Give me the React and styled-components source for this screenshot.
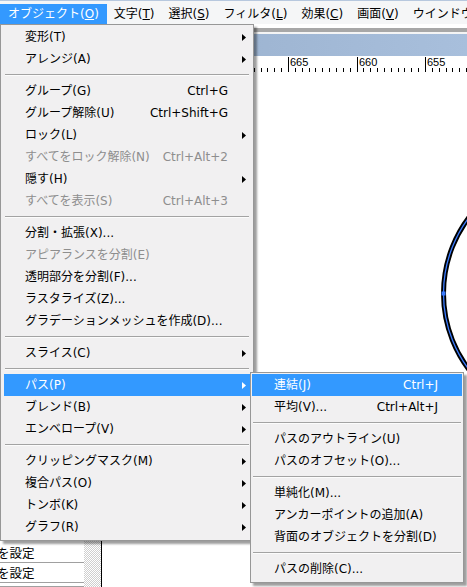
import React from 'react';
import styled, { createGlobalStyle } from 'styled-components';

const Global = createGlobalStyle`
  html, body { margin: 0; padding: 0; background: #fff; }
  body {
    font-family: "DejaVu Sans", "Noto Sans CJK JP", sans-serif;
    font-size: 12px;
    color: #000;
  }
`;

const Screen = styled.div`
  position: relative;
  width: 467px;
  height: 587px;
  overflow: hidden;
  background: #fff;
  display: flex;
  flex-direction: column;
`;

const MenuBar = styled.div`
  height: 24px;
  box-sizing: border-box;
  border-top: 1px solid #b7c8de;
  padding-top: 3px;
  display: flex;
  background: #f5f6f7;
  white-space: nowrap;
  overflow: hidden;
`;

const BarItem = styled.div`
  height: 20px;
  line-height: 20px;
  padding: 0 ${p => (p.$active ? '8px' : '7px')} 0 ${p => (p.$active ? '8px' : '7px')};
  flex: none;
  background: ${p => (p.$active ? '#3399ff' : 'transparent')};
  color: ${p => (p.$active ? '#fff' : '#000')};
`;

const Key = styled.span`
  text-decoration: underline;
  text-underline-offset: 1px;
`;

const Workspace = styled.div`
  flex: 1;
  display: flex;
  min-height: 0;
`;

const LeftPanel = styled.div`
  width: 84px;
  flex: none;
  display: flex;
  flex-direction: column;
  justify-content: flex-end;
  background: #fff;
  overflow: hidden;
`;

const PanelRow = styled.div`
  height: ${p => p.$h || 20}px;
  flex: none;
  box-sizing: border-box;
  border-bottom: 1px solid #a0a0a0;
  line-height: 19px;
  font-size: 12.5px;
  text-indent: -3px;
  white-space: nowrap;
  overflow: hidden;
  font-family: "Noto Sans CJK JP", sans-serif;
`;

const Splitter = styled.div`
  width: 17px;
  flex: none;
  background: repeating-conic-gradient(#cfcfcf 0 25%, #ffffff 0 50%) 0 0 / 2px 2px;
`;

const DocWindow = styled.div`
  flex: 1;
  min-width: 0;
  border-left: 1px solid #000;
  display: flex;
  flex-direction: column;
  background: #fff;
`;

const TopGap = styled.div`
  height: 4px;
  flex: none;
  background: #fff;
`;

const GrayStrip = styled.div`
  height: 4px;
  flex: none;
  background: #a7a7a7;
  border-bottom: 2px solid #f4f4f4;
`;

const TitleBar = styled.div`
  height: 22px;
  flex: none;
  background: linear-gradient(90deg, #96b1cf 0%, #9fb6d3 45%, #a8bfdc 100%);
`;

const RulerBox = styled.div`
  height: 16px;
  flex: none;
  background: #fff;
  svg { display: block; }
`;

const Canvas = styled.div`
  flex: 1;
  min-height: 0;
  background: #fff;
  svg { display: block; }
`;

const Menu = styled.div`
  position: absolute;
  left: ${p => p.$x}px;
  top: ${p => p.$y}px;
  width: ${p => p.$w}px;
  box-sizing: border-box;
  border: 1px solid #979797;
  padding: ${p => p.$pad};
  background: #f1f0f1;
  box-shadow: 3px 3px 2px rgba(0, 0, 0, 0.38);
  z-index: ${p => p.$z || 10};
`;

const Item = styled.div`
  height: 22px;
  display: grid;
  grid-template-columns: 1fr auto ${p => p.$arrowCol}px;
  align-items: center;
  padding-left: ${p => p.$indent}px;
  white-space: nowrap;
  background: ${p => (p.$active ? '#3399ff' : 'transparent')};
  color: ${p => (p.$active ? '#fff' : p.$disabled ? '#8e8e8e' : '#000')};
`;

const Label = styled.span`
  line-height: 22px;
`;

const Shortcut = styled.span`
  line-height: 22px;
  text-align: right;
`;

const ArrowCell = styled.span`
  display: flex;
  align-items: center;
  padding-left: ${p => p.$off}px;
`;

const Separator = styled.div`
  height: 10px;
  display: flex;
  align-items: center;
  padding: 0 ${p => p.$inset}px;
  &::before {
    content: '';
    flex: 1;
    border-top: 1px solid #a3a3a3;
    border-bottom: 1px solid #fcfcfc;
  }
`;

const Arrow = () => (
  <svg width="4" height="7" viewBox="0 0 4 7">
    <polygon points="0,0 4,3.5 0,7" fill="currentColor" />
  </svg>
);

const mainItems = [
  { label: '変形(T)', sub: true },
  { label: 'アレンジ(A)', sub: true },
  'sep',
  { label: 'グループ(G)', sc: 'Ctrl+G' },
  { label: 'グループ解除(U)', sc: 'Ctrl+Shift+G' },
  { label: 'ロック(L)', sub: true },
  { label: 'すべてをロック解除(N)', sc: 'Ctrl+Alt+2', disabled: true },
  { label: '隠す(H)', sub: true },
  { label: 'すべてを表示(S)', sc: 'Ctrl+Alt+3', disabled: true },
  'sep',
  { label: '分割・拡張(X)...' },
  { label: 'アピアランスを分割(E)', disabled: true },
  { label: '透明部分を分割(F)...' },
  { label: 'ラスタライズ(Z)...' },
  { label: 'グラデーションメッシュを作成(D)...' },
  'sep',
  { label: 'スライス(C)', sub: true },
  'sep',
  { label: 'パス(P)', sub: true, active: true },
  { label: 'ブレンド(B)', sub: true },
  { label: 'エンベロープ(V)', sub: true },
  'sep',
  { label: 'クリッピングマスク(M)', sub: true },
  { label: '複合パス(O)', sub: true },
  { label: 'トンボ(K)', sub: true },
  { label: 'グラフ(R)', sub: true },
];

const pathItems = [
  { label: '連結(J)', sc: 'Ctrl+J', active: true },
  { label: '平均(V)...', sc: 'Ctrl+Alt+J' },
  'sep',
  { label: 'パスのアウトライン(U)' },
  { label: 'パスのオフセット(O)...' },
  'sep',
  { label: '単純化(M)...' },
  { label: 'アンカーポイントの追加(A)' },
  { label: '背面のオブジェクトを分割(D)' },
  'sep',
  { label: 'パスの削除(C)...' },
];

const barItems = [
  ['オブジェクト(', 'O', ')'],
  ['文字(', 'T', ')'],
  ['選択(', 'S', ')'],
  ['フィルタ(', 'L', ')'],
  ['効果(', 'C', ')'],
  ['画面(', 'V', ')'],
  ['ウインドウ(', 'W', ')'],
];

function MenuList({ items, indent, arrowCol, arrowOff, sepInset }) {
  return items.map((it, i) =>
    it === 'sep' ? (
      <Separator key={i} $inset={sepInset} />
    ) : (
      <Item
        key={i}
        $indent={indent}
        $arrowCol={arrowCol}
        $active={it.active}
        $disabled={it.disabled}
      >
        <Label>{it.label}</Label>
        <Shortcut>{it.sc || ''}</Shortcut>
        <ArrowCell $off={arrowOff}>{it.sub ? <Arrow /> : null}</ArrowCell>
      </Item>
    )
  );
}

function Ruler() {
  const major = 186;
  const step = 68.5;
  const minor = step / 10;
  const ticks = [];
  for (let k = -40; k <= 30; k++) {
    const x = major + k * minor;
    if (x < 0 || x > 370) continue;
    const isMajor = k % 10 === 0;
    ticks.push(
      <line
        key={k}
        x1={Math.round(x) + 0.5}
        x2={Math.round(x) + 0.5}
        y1={isMajor ? 1 : 12}
        y2={16}
        stroke="#000"
        strokeWidth="1"
      />
    );
  }
  const labels = [
    [major - 2 * step, '675'],
    [major - step, '670'],
    [major, '665'],
    [major + step, '660'],
    [major + 2 * step, '655'],
  ];
  return (
    <svg width="366" height="16" viewBox="0 0 366 16">
      {ticks}
      {labels.map(([x, t]) => (
        <text
          key={t}
          x={Math.round(x) + 2}
          y={10}
          fontFamily="Liberation Sans, Arial, sans-serif"
          fontSize="11"
          fill="#000"
        >
          {t}
        </text>
      ))}
    </svg>
  );
}

function Artwork() {
  const cx = 468;
  const cy = 221.5;
  const r = 126.5;
  return (
    <svg width="366" height="515" viewBox="0 0 366 515">
      <circle cx={cx} cy={cy} r={r} fill="none" stroke="#000" strokeWidth="5" />
      <circle cx={cx} cy={cy} r={r} fill="none" stroke="#3b7cff" strokeWidth="1.3" />
      <rect x={cx - r - 2} y={cy - 2} width="4" height="4" fill="#3b7cff" />
    </svg>
  );
}

export default function App() {
  return (
    <>
      <Global />
      <Screen>
        <MenuBar>
          {barItems.map(([a, k, b], i) => (
            <BarItem key={i} $active={i === 0}>
              {a}
              <Key>{k}</Key>
              {b}
            </BarItem>
          ))}
        </MenuBar>
        <Workspace>
          <LeftPanel>
            <PanelRow>を設定</PanelRow>
            <PanelRow>を設定</PanelRow>
            <PanelRow $h={4} />
          </LeftPanel>
          <Splitter />
          <DocWindow>
            <TopGap />
            <GrayStrip />
            <TitleBar />
            <RulerBox>
              <Ruler />
            </RulerBox>
            <Canvas>
              <Artwork />
            </Canvas>
          </DocWindow>
        </Workspace>

        <Menu $x={0} $y={24} $w={254} $pad="1px 3px 2px 3px">
          <MenuList items={mainItems} indent={21} arrowCol={22} arrowOff={14} sepInset={1} />
        </Menu>

        <Menu $x={250} $y={372} $w={214} $pad="1px 1px 2px 1px" $z={11}>
          <MenuList items={pathItems} indent={22} arrowCol={24} arrowOff={16} sepInset={1} />
        </Menu>
      </Screen>
    </>
  );
}
